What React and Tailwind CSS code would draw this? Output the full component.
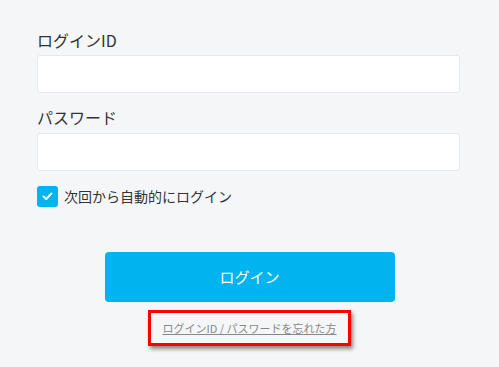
export default function App() {
  return (
    <div
      className="min-h-[367px] w-[499px] bg-[#f5f6f8] px-[37px] pt-[29px] text-[#333]"
      style={{ fontFamily: '"Noto Sans CJK JP", "Noto Sans", sans-serif' }}
    >
      {/* ID */}
      <label className="block text-[16px] leading-[22px]">ログインID</label>
      <input
        type="text"
        className="mt-[4px] block h-[38px] w-[423px] rounded-[3px] border border-[#e6e8eb] bg-white outline-none"
      />

      {/* password */}
      <label className="mt-[13px] block text-[16px] leading-[22px]">パスワード</label>
      <input
        type="password"
        className="mt-[5px] block h-[38px] w-[423px] rounded-[3px] border border-[#e6e8eb] bg-white outline-none"
      />

      {/* remember */}
      <div className="mt-[15px] flex items-center gap-[6px]">
        <span className="flex h-[21px] w-[21px] items-center justify-center rounded-[3px] bg-[#00b4ef]">
          <svg width="11" height="9" viewBox="0 0 11 9" fill="none">
            <path d="M1.5 4.5 L4.2 7 L9.5 1.5" stroke="white" strokeWidth="2" strokeLinecap="round" strokeLinejoin="round" />
          </svg>
        </span>
        <span className="text-[14px] leading-[21px]">次回から自動的にログイン</span>
      </div>

      {/* submit */}
      <div className="mt-[45px] flex flex-col items-center">
        <button className="h-[50px] w-[290px] rounded-[4px] bg-[#00b4ef] text-[15px] text-white">
          ログイン
        </button>
        <div className="mt-[8px] flex h-[36px] w-[203px] items-center justify-center border-[3px] border-[#f00] shadow-[2px_3px_4px_rgba(0,0,0,0.45)]">
          <a href="#" className="text-[11px] leading-none text-[#888] underline">
            ログインID / パスワードを忘れた方
          </a>
        </div>
      </div>
    </div>
  );
}
